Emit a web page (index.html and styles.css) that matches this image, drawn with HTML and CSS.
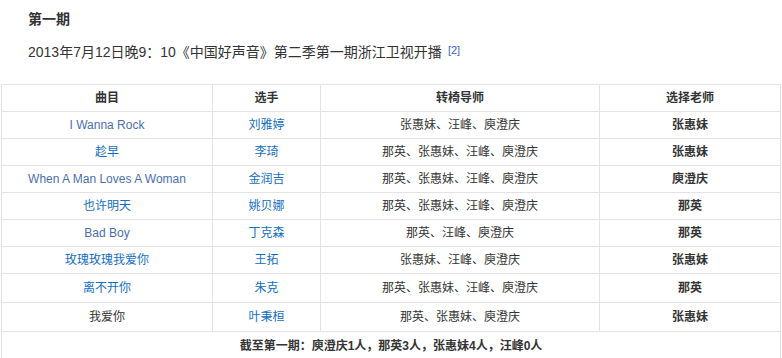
FILE: index.html
```html
<!DOCTYPE html>
<html lang="zh-CN">
<head>
<meta charset="utf-8">
<link rel="stylesheet" href="styles.css">
</head>
<body>
<div class="page">
  <h3 class="title">第一期</h3>
  <p class="intro">2013年7月12日晚9：10《中国好声音》第二季第一期浙江卫视开播<sup class="ref">[2]</sup></p>
  <table class="grid">
    <colgroup>
      <col class="c1"><col class="c2"><col class="c3"><col class="c4">
    </colgroup>
    <thead>
      <tr><th>曲目</th><th>选手</th><th>转椅导师</th><th>选择老师</th></tr>
    </thead>
    <tbody>
      <tr><td><a class="en">I Wanna Rock</a></td><td><a>刘雅婷</a></td><td>张惠妹、汪峰、庾澄庆</td><td class="pick">张惠妹</td></tr>
      <tr><td><a>趁早</a></td><td><a>李琦</a></td><td>那英、张惠妹、汪峰、庾澄庆</td><td class="pick">张惠妹</td></tr>
      <tr><td><a class="en">When A Man Loves A Woman</a></td><td><a>金润吉</a></td><td>那英、张惠妹、汪峰、庾澄庆</td><td class="pick">庾澄庆</td></tr>
      <tr><td><a>也许明天</a></td><td><a>姚贝娜</a></td><td>那英、张惠妹、汪峰、庾澄庆</td><td class="pick">那英</td></tr>
      <tr><td><a class="en">Bad Boy</a></td><td><a>丁克森</a></td><td>那英、汪峰、庾澄庆</td><td class="pick">那英</td></tr>
      <tr><td><a>玫瑰玫瑰我爱你</a></td><td><a>王拓</a></td><td>张惠妹、汪峰、庾澄庆</td><td class="pick">张惠妹</td></tr>
      <tr class="tall"><td><a>离不开你</a></td><td><a>朱克</a></td><td>那英、张惠妹、汪峰、庾澄庆</td><td class="pick">那英</td></tr>
      <tr class="tall"><td>我爱你</td><td><a>叶秉桓</a></td><td>那英、张惠妹、庾澄庆</td><td class="pick">张惠妹</td></tr>
      <tr class="tall"><td class="sum" colspan="4">截至第一期：庾澄庆1人，那英3人，张惠妹4人，汪峰0人</td></tr>
    </tbody>
  </table>
</div>
</body>
</html>
```
FILE: styles.css
```css
html, body {
  margin: 0;
  padding: 0;
  background: #ffffff;
}
body {
  font-family: "Liberation Sans", Arial, "Noto Sans CJK SC", sans-serif;
  color: #333333;
}
.page {
  padding: 0 0 0 1px;
}
.title {
  margin: 0;
  padding: 9px 0 0 27px;
  font-size: 14px;
  line-height: 20px;
  font-weight: bold;
  color: #333;
}
.intro {
  margin: 13px 0 0 0;
  padding-left: 27px;
  font-size: 14px;
  line-height: 20px;
  color: #333;
}
.ref {
  font-size: 11px;
  color: #3366cc;
  vertical-align: 3px;
  line-height: 0;
  margin-left: 6px;
}
.grid {
  margin-top: 22px;
  border-collapse: collapse;
  table-layout: fixed;
  width: 779px;
  font-size: 12px;
}
.c1 { width: 211px; }
.c2 { width: 108px; }
.c3 { width: 279px; }
.c4 { width: 181px; }
.grid th, .grid td {
  border: 1px solid #e3e3e3;
  text-align: center;
  vertical-align: middle;
  height: 26px;
  padding: 0 4px;
  line-height: 18px;
  color: #333;
}
.grid th {
  font-weight: bold;
}
.grid tr.tall td {
  height: 28px;
}
.grid a {
  color: #136ec2;
  text-decoration: none;
}
.grid a.en {
  color: #4a6eb0;
}
.grid .pick {
  font-weight: bold;
}
.grid .sum {
  font-weight: bold;
}
```
